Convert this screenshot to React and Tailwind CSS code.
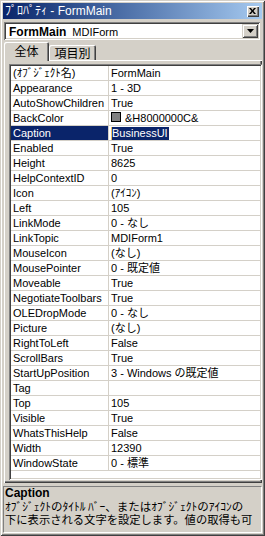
const rows = [
  ["(ｵﾌﾞｼﾞｪｸﾄ名)", "FormMain"],
  ["Appearance", "1 - 3D"],
  ["AutoShowChildren", "True"],
  ["BackColor", "&H8000000C&", "color"],
  ["Caption", "BusinessUI", "selected"],
  ["Enabled", "True"],
  ["Height", "8625"],
  ["HelpContextID", "0"],
  ["Icon", "(ｱｲｺﾝ)"],
  ["Left", "105"],
  ["LinkMode", "0 - なし"],
  ["LinkTopic", "MDIForm1"],
  ["MouseIcon", "(なし)"],
  ["MousePointer", "0 - 既定値"],
  ["Moveable", "True"],
  ["NegotiateToolbars", "True"],
  ["OLEDropMode", "0 - なし"],
  ["Picture", "(なし)"],
  ["RightToLeft", "False"],
  ["ScrollBars", "True"],
  ["StartUpPosition", "3 - Windows の既定値"],
  ["Tag", ""],
  ["Top", "105"],
  ["Visible", "True"],
  ["WhatsThisHelp", "False"],
  ["Width", "12390"],
  ["WindowState", "0 - 標準"],
];

const PropRow = ({ name, value, kind }) => {
  const selected = kind === "selected";
  return (
    <div className="flex h-[15px] border-b border-[#d4d0c8]">
      {/* name column */}
      <div
        className={`w-[98px] shrink-0 border-r border-[#d4d0c8] pl-[2px] flex items-center whitespace-nowrap overflow-hidden ${
          selected ? "bg-[#0a246a] text-white" : "text-black"
        }`}
      >
        {name}
      </div>
      {/* value column */}
      <div className="flex-1 pl-[2px] flex items-center whitespace-nowrap overflow-hidden text-black">
        {kind === "color" && (
          <span className="w-[10px] h-[10px] bg-[#808080] border border-black mr-[4px] -mt-[2px] shrink-0"></span>
        )}
        {selected ? (
          <span className="flex items-center h-[13px]">
            <span className="w-[1px] h-[13px] bg-[#f0c060]"></span>
            <span className="bg-[#0a246a] text-white h-[13px] leading-[13px] pr-[1px]">{value}</span>
          </span>
        ) : (
          value
        )}
      </div>
    </div>
  );
};

const App = () => {
  return (
    <div className="w-[265px] h-[536px] bg-[#d4d0c8] p-[3px] flex flex-col font-['Liberation_Sans','Noto_Sans_CJK_JP',sans-serif] shadow-[inset_1px_1px_0_#d4d0c8,inset_-1px_-1px_0_#404040,inset_2px_2px_0_#fff,inset_-2px_-2px_0_#808080]">
      {/* Title bar */}
      <div className="h-[16px] shrink-0 flex items-center bg-gradient-to-r from-[#0a246a] to-[#a6caf0] pl-[2px] pr-[3px]">
        <span className="flex-1 text-white text-[12px] leading-none whitespace-nowrap">ﾌﾟﾛﾊﾟﾃｨ - FormMain</span>
        <div className="w-[12px] h-[11px] bg-[#d4d0c8] flex items-center justify-center shadow-[inset_1px_1px_0_#fff,inset_-1px_-1px_0_#404040,inset_-2px_-2px_0_#808080]">
          <svg width="7" height="6" viewBox="0 0 7 6" className="-mt-[1px] -ml-[1px]">
            <path d="M0 0h2l1.5 2L5 0h2L4.5 3 7 6H5L3.5 4 2 6H0l2.5-3z" fill="#000" />
          </svg>
        </div>
      </div>

      {/* Object combo */}
      <div className="mt-[3px] ml-[1px] mr-[2px] h-[18px] shrink-0 bg-white p-[2px] flex items-center shadow-[inset_1px_1px_0_#808080,inset_-1px_-1px_0_#fff,inset_2px_2px_0_#404040,inset_-2px_-2px_0_#d4d0c8]">
        <div className="flex-1 pl-[3px] whitespace-nowrap text-black leading-none">
          <span className="font-bold text-[12px]">FormMain</span>
          <span className="text-[11px] ml-[6px]">MDIForm</span>
        </div>
        <div className="w-[16px] h-[14px] bg-[#d4d0c8] flex items-center justify-center shadow-[inset_1px_1px_0_#d4d0c8,inset_-1px_-1px_0_#404040,inset_2px_2px_0_#fff,inset_-2px_-2px_0_#808080]">
          <svg width="7" height="4" viewBox="0 0 7 4">
            <path d="M0 0h7L3.5 4z" fill="#000" />
          </svg>
        </div>
      </div>

      {/* Tabs */}
      <div className="mt-[2px] ml-[1px] h-[18px] shrink-0 flex items-end">
        <div className="relative z-10 -mb-px w-[45px] h-[19px] bg-[#d4d0c8] rounded-tl-[2px] rounded-tr-[2px] flex items-center justify-center text-[12px] text-black shadow-[inset_1px_1px_0_#fff,inset_-1px_0_0_#404040,inset_-2px_0_0_#808080]">
          全体
        </div>
        <div className="w-[47px] h-[15px] bg-[#d4d0c8] rounded-tl-[2px] rounded-tr-[2px] flex items-center justify-center pt-[2px] text-[12px] text-black shadow-[inset_1px_1px_0_#fff,inset_-1px_0_0_#404040,inset_-2px_0_0_#808080]">
          項目別
        </div>
      </div>

      {/* Tab page */}
      <div className="ml-[1px] h-[423px] shrink-0 pt-[4px] pl-[5px] pb-[3px] shadow-[inset_1px_1px_0_#fff,inset_-1px_-1px_0_#404040,inset_-2px_-2px_0_#808080]">
        <div className="h-[416px] bg-white p-[2px] text-[11px] shadow-[inset_1px_1px_0_#808080,inset_-1px_-1px_0_#fff,inset_2px_2px_0_#404040,inset_-2px_-2px_0_#d4d0c8]">
          {rows.map(([name, value, kind]) => (
            <PropRow key={name} name={name} value={value} kind={kind} />
          ))}
        </div>
      </div>

      {/* Description */}
      <div className="mt-[3px] h-[47px] shrink-0 border-t border-l border-[#808080] border-r-white border-b-white border-r border-b pl-[1px] text-black whitespace-nowrap overflow-hidden">
        <div className="font-bold text-[12px] leading-[13px]">Caption</div>
        <div className="text-[11.5px] leading-[13px] font-['Noto_Sans_CJK_JP',sans-serif]">ｵﾌﾞｼﾞｪｸﾄのﾀｲﾄﾙ ﾊﾞｰ、またはｵﾌﾞｼﾞｪｸﾄのｱｲｺﾝの</div>
        <div className="text-[11.3px] leading-[13px] font-['Noto_Sans_CJK_JP',sans-serif]">下に表示される文字を設定します。値の取得も可</div>
      </div>
    </div>
  );
};

export default App;
